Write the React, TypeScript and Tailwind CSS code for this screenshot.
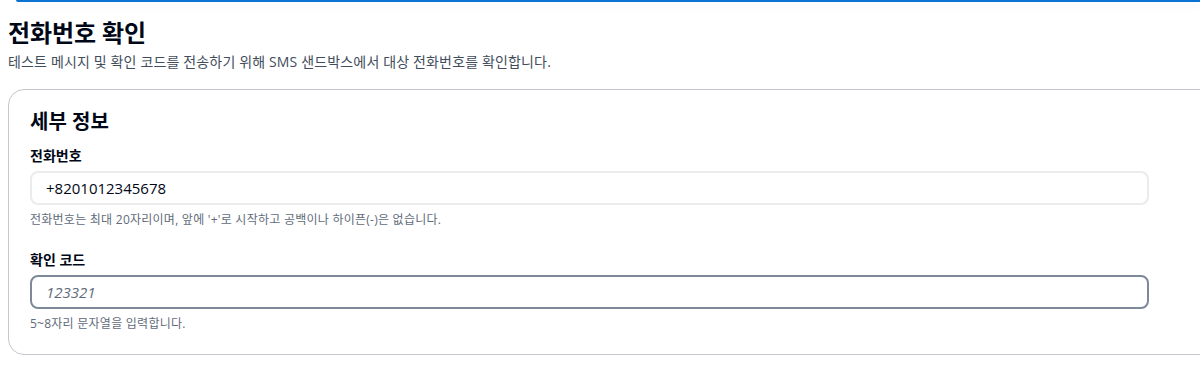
export default function App() {
  const font = { fontFamily: '"Open Sans", "Noto Sans CJK KR", sans-serif' };
  return (
    <div className="w-[1200px] h-[388px] overflow-hidden bg-white relative text-[#000716]" style={font}>
      <div className="ml-4 h-[2px] bg-[#0972d3] rounded-bl-sm shadow-[0_4px_8px_rgba(0,7,22,0.08)]" />
      <div className="px-2">
        <h1 className="mt-[15px] text-[24px] leading-[32px] font-bold tracking-[-0.1px]">전화번호 확인</h1>
        <p className="mt-[3px] text-[14px] leading-[20px] text-[#414d5c] tracking-[0.15px]">
          테스트 메시지 및 확인 코드를 전송하기 위해 SMS 샌드박스에서 대상 전화번호를 확인합니다.
        </p>
        <div className="mt-[17px] w-[1220px] border border-[#c6c6cd] rounded-[16px] pl-[21px] pt-[19px] pb-[22px]">
          <h2 className="text-[20px] leading-[26px] font-bold">세부 정보</h2>
          <div className="mt-[11px]">
            <label className="block text-[14px] leading-[20px] font-bold">전화번호</label>
            <div className="mt-[5px] w-[1119px] h-[34px] border-2 border-[#e9ebed] rounded-[8px] flex items-center pl-[14px] text-[15px]">
              +8201012345678
            </div>
            <p className="mt-[7px] text-[12px] leading-[16px] text-[#5f6b7a] tracking-[0.25px]">
              전화번호는 최대 20자리이며, 앞에 '+'로 시작하고 공백이나 하이픈(-)은 없습니다.
            </p>
          </div>
          <div className="mt-[22px]">
            <label className="block text-[14px] leading-[20px] font-bold">확인 코드</label>
            <div className="mt-[5px] w-[1119px] h-[34px] border-2 border-[#7d8998] rounded-[8px] flex items-center pl-[14px] text-[15px] italic text-[#5f6b7a]">
              123321
            </div>
            <p className="mt-[7px] text-[12px] leading-[16px] text-[#5f6b7a] tracking-[0.25px]">5~8자리 문자열을 입력합니다.</p>
          </div>
        </div>
      </div>
    </div>
  );
}
